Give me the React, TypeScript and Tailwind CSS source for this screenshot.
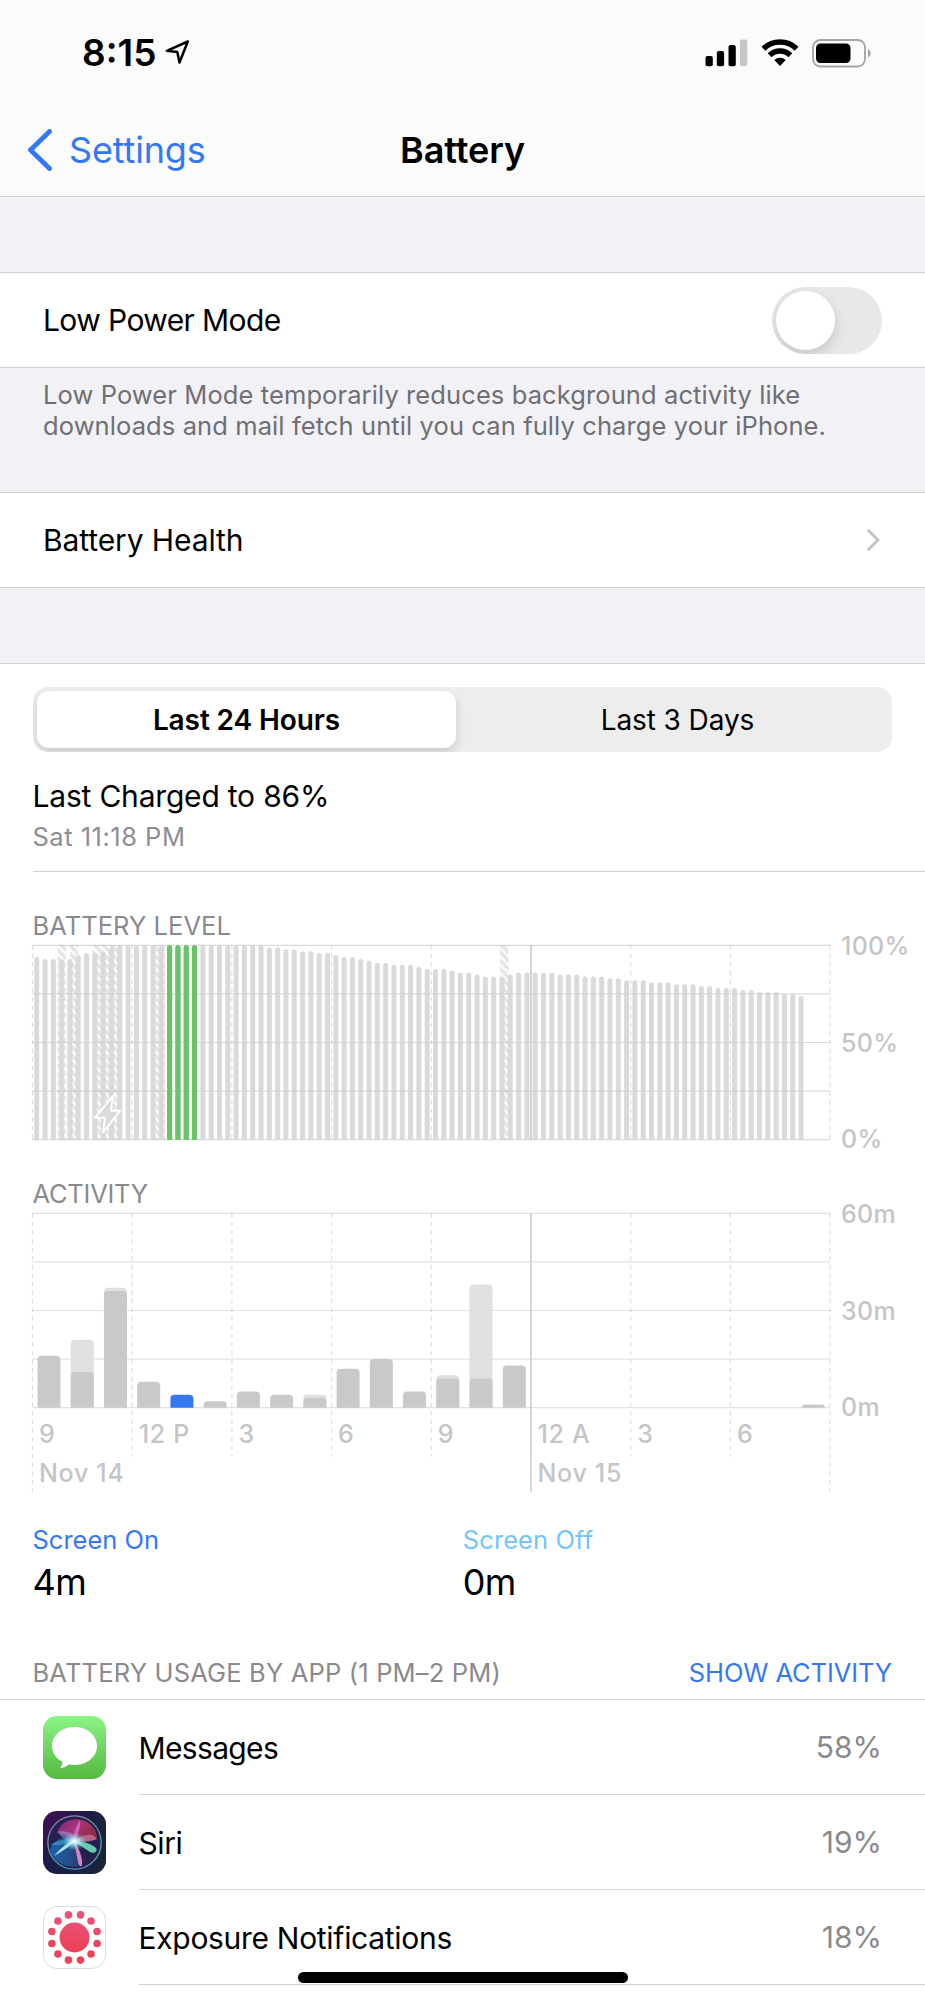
const LEVELS: number[] = [
  94, 93, 93, 93, 93, 95, 96, 96, 97, 99, 100, 100, 100, 100, 100, 100, 100, 100, 100, 100, 100, 100, 100, 100, 100, 100,
  100, 100, 99, 99, 98, 98, 97, 97, 96, 96, 95, 94, 94, 93, 92, 91, 91, 90, 90, 90, 89, 88, 88, 88, 87, 86, 86, 85, 84,
  84, 84, 85, 86, 86, 86, 86, 86, 85, 85, 85, 84, 84, 84, 83, 83, 82, 82, 82, 81, 81, 81, 80, 80, 80, 79, 79, 78, 78,
  78, 77, 77, 76, 76, 76, 75, 75, 74,
];

// Charging periods, as [start, end] in 15 minute slots.
const CHARGING: [number, number][] = [
  [3, 4.05],
  [4.5, 5.5],
  [7.25, 10.5],
  [14.7, 15.95],
  [56.25, 57.3],
];

type Hour = { slot: number; on: number; off: number; active?: boolean };
const HOURS: Hour[] = [
  { slot: 0, on: 16, off: 0 },
  { slot: 1, on: 11, off: 10 },
  { slot: 2, on: 36, off: 1 },
  { slot: 3, on: 8, off: 0 },
  { slot: 4, on: 4, off: 0, active: true },
  { slot: 5, on: 2, off: 0 },
  { slot: 6, on: 5, off: 0 },
  { slot: 7, on: 4, off: 0 },
  { slot: 8, on: 3, off: 1 },
  { slot: 9, on: 12, off: 0 },
  { slot: 10, on: 15, off: 0 },
  { slot: 11, on: 5, off: 0 },
  { slot: 12, on: 9, off: 1 },
  { slot: 13, on: 9, off: 29 },
  { slot: 14, on: 13, off: 0 },
  { slot: 23, on: 1, off: 0 },
];

const W = 797.6;
const H = 194.4;
const GRID = [0, 1, 2, 3, 4, 5, 6, 7, 8];

const isSelected = (slot: number) => slot >= 16 && slot <= 19;

function topRounded(x: number, y: number, w: number, h: number, radius: number) {
  const r = Math.min(radius, h);
  return `M${x} ${y + h}V${y + r}Q${x} ${y} ${x + r} ${y}H${x + w - r}Q${x + w} ${y} ${x + w} ${y + r}V${y + h}Z`;
}

function GridLines({ faint = false }: { faint?: boolean }) {
  return (
    <g stroke="#000" strokeOpacity={faint ? 0.035 : 0.115} strokeWidth="1.2">
      {[0, 1, 2, 3, 4].map((i) => (
        <line key={i} x1="0" x2={W} y1={(i * H) / 4} y2={(i * H) / 4} />
      ))}
    </g>
  );
}

function BatteryLevelChart() {
  const pitch = W / 96;
  const bar = (v: number, i: number) => {
    const h = (v / 100) * H;
    return <path key={i} d={topRounded(i * pitch + 1.7, H - h, 5, h, 2.5)} fill={isSelected(i) ? "#68c466" : "#dadada"} />;
  };
  return (
    <svg width="841" height="212" viewBox="-32.5 -9.3 841 212" className="block shrink-0">
      <defs>
        <pattern id="hatch" width="8.3" height="8.3" patternUnits="userSpaceOnUse">
          <rect width="8.3" height="8.3" fill="#e6e6e7" />
          <path d="M-2 -2L10.3 10.3M-2 6.3L2 10.3M6.3 -2L10.3 2" stroke="#fff" strokeWidth="2" />
        </pattern>
      </defs>
      {GRID.map((i) => (
        <line key={i} x1={(i * W) / 8} x2={(i * W) / 8} y1="0" y2={H} stroke="#dededf" strokeWidth="1.2" strokeDasharray="4.3 4.3" />
      ))}
      {CHARGING.map(([a, b]) => (
        <rect key={a} x={a * pitch} y="0" width={(b - a) * pitch} height={H} fill="url(#hatch)" />
      ))}
      <GridLines />
      {LEVELS.map(bar)}
      <GridLines faint />
      {LEVELS.map((v, i) => (isSelected(i) ? bar(v, i) : null))}
      <line x1={(5 * W) / 8} x2={(5 * W) / 8} y1="0" y2={H} stroke="#c9c9cb" strokeWidth="1.4" />
      <path
        d="M80.5 150.500L62.500 172.500H72.500L70.500 187L87.500 165.500H78.500Z"
        fill="#dadada"
        stroke="#fff"
        strokeWidth="1.9"
        strokeLinejoin="round"
      />
    </svg>
  );
}

function ActivityChart() {
  const pitch = W / 24;
  const unit = H / 60;
  return (
    <svg width="841" height="290" viewBox="-32.5 -9.3 841 290" className="block shrink-0">
      {GRID.map((i) => (
        <line
          key={i}
          x1={(i * W) / 8}
          x2={(i * W) / 8}
          y1="0"
          y2={i === 0 || i === 8 ? 279 : 243}
          stroke="#dededf"
          strokeWidth="1.2"
          strokeDasharray="4.3 4.3"
        />
      ))}
      <GridLines />
      <line x1={(5 * W) / 8} x2={(5 * W) / 8} y1="0" y2="279" stroke="#c9c9cb" strokeWidth="1.4" />
      {HOURS.map(({ slot, on, off, active }) => {
        const x = slot * pitch + 5;
        const total = (on + off) * unit;
        return (
          <g key={slot}>
            {off > 0 && <path d={topRounded(x, H - total, 23, total, 4)} fill="#e0e0e0" />}
            <path d={topRounded(x, H - on * unit, 23, on * unit, 4)} fill={active ? "#3478f6" : "#c9c9c9"} />
          </g>
        );
      })}
      <g fontFamily="Inter, sans-serif" fontSize="25" fontWeight="500" letterSpacing="0.7" fill="#c5c5c7">
        {["9", "12 P", "3", "6", "9", "12 A", "3", "6"].map((t, i) => (
          <text key={i} x={(i * W) / 8 + 6.5} y="229.5">
            {t}
          </text>
        ))}
        <text x="6.5" y="269">
          Nov 14
        </text>
        <text x={(5 * W) / 8 + 6.5} y="269">
          Nov 15
        </text>
      </g>
    </svg>
  );
}

function AxisLabels({ labels }: { labels: string[] }) {
  return (
    <div className="flex h-[212px] w-[84px] shrink-0 flex-col justify-between pt-px text-[25px] leading-[18px] font-medium tracking-[0.3px] text-[#c5c5c7]">
      {labels.map((l) => (
        <span key={l}>{l}</span>
      ))}
    </div>
  );
}

function MessagesIcon() {
  return (
    <svg width="63" height="63" viewBox="0 0 63 63">
      <defs>
        <linearGradient id="msg" x1="0" y1="0" x2="0" y2="1">
          <stop offset="0" stopColor="#8cf486" />
          <stop offset="1" stopColor="#54b840" />
        </linearGradient>
      </defs>
      <rect width="63" height="63" rx="14" fill="url(#msg)" />
      <path
        d="M31.500 11C18.800 11 9 19.500 9 30C9 37 13 42.500 19.500 46C19.500 48 18.800 50 17 52C20.500 52 23.500 50.500 26 48.600C27.800 48.900 29.600 49 31.500 49C44.200 49 54 40.500 54 30C54 19.500 44.200 11 31.500 11Z"
        fill="#fff"
      />
    </svg>
  );
}

function SiriIcon() {
  return (
    <svg width="63" height="63" viewBox="0 0 63 63">
      <defs>
        <linearGradient id="siri-bg" x1="0" y1="0" x2="1" y2="1">
          <stop offset="0" stopColor="#410f56" />
          <stop offset="0.5" stopColor="#1b1c4a" />
          <stop offset="1" stopColor="#16263a" />
        </linearGradient>
        <linearGradient id="siri-edge" x1="0" y1="0" x2="1" y2="0">
          <stop offset="0.7" stopColor="#1b2436" stopOpacity="0" />
          <stop offset="1" stopColor="#1b2436" />
        </linearGradient>
        <linearGradient id="siri-ring" x1="0" y1="0" x2="0.6" y2="1">
          <stop offset="0" stopColor="#a479b8" />
          <stop offset="0.5" stopColor="#5f9f93" />
          <stop offset="1" stopColor="#5b9fc4" />
        </linearGradient>
        <linearGradient id="siri-top" x1="0" y1="0" x2="1" y2="0.5">
          <stop offset="0" stopColor="#8a2c98" />
          <stop offset="0.5" stopColor="#d63a86" />
          <stop offset="1" stopColor="#b0303f" />
        </linearGradient>
        <linearGradient id="siri-low" x1="0" y1="0" x2="1" y2="0">
          <stop offset="0" stopColor="#1c5fae" />
          <stop offset="1" stopColor="#2d6fae" stopOpacity="0.4" />
        </linearGradient>
        <radialGradient id="siri-glow">
          <stop offset="0" stopColor="#fff" />
          <stop offset="0.3" stopColor="#d4f6ff" stopOpacity="0.8" />
          <stop offset="1" stopColor="#5fd0f0" stopOpacity="0" />
        </radialGradient>
      </defs>
      <rect width="63" height="63" rx="14" fill="url(#siri-bg)" />
      <rect width="63" height="63" rx="14" fill="url(#siri-edge)" />
      <circle cx="31.5" cy="31.5" r="26" fill="#26204f" />
      <path d="M14 22C17 11 29 6 39 9C49 12 54 20 54 28C45 31 37 31 31 30C24 25 19 22 14 22Z" fill="url(#siri-top)" opacity="0.75" />
      <path d="M7 38C13 26 23 25 31 30C35 38 37 47 36 55C22 58 9 50 7 38Z" fill="url(#siri-low)" />
      <path d="M15 20C26 19 35 25 38 31C29 33 18 29 15 20Z" fill="#8fa9e0" opacity="0.5" />
      <path d="M32 30C41 22 50 22 54 28C47 31 39 32 32 30Z" fill="#d9a0c0" opacity="0.5" />
      <path d="M37 9C33 15 30 23 30 31C34 28 38 17 37 9Z" fill="#e08ae0" opacity="0.6" />
      <path d="M7 34C15 29 24 27 33 29C26 33 16 35 7 34Z" fill="#4cc0d8" opacity="0.45" />
      <path d="M11 45C17 38 24 31 32 29C29 34 20 40 11 45Z" fill="#9cebf3" />
      <path d="M31 31C38 29 49 33 53 37C55 41 51 43 47 41C42 38 37 34 31 31Z" fill="#6fdcba" opacity="0.9" />
      <path d="M31 30C36 37 40 47 39 54C38 57 36 55 35 51C34 44 32 37 31 30Z" fill="#e98fd0" opacity="0.9" />
      <ellipse cx="31.5" cy="30.5" rx="12" ry="9" fill="url(#siri-glow)" />
      <circle cx="31.5" cy="31.5" r="26.7" fill="none" stroke="url(#siri-ring)" strokeWidth="1.3" />
    </svg>
  );
}

function ExposureIcon() {
  return (
    <svg width="63" height="63" viewBox="0 0 63 63">
      <defs>
        <linearGradient id="exp" gradientUnits="userSpaceOnUse" x1="0" y1="5" x2="0" y2="40">
          <stop offset="0" stopColor="#e95480" />
          <stop offset="1" stopColor="#ea445a" />
        </linearGradient>
      </defs>
      <rect x="0.5" y="0.5" width="62" height="62" rx="13.5" fill="#fff" stroke="#dcdcdc" />
      <g fill="url(#exp)">
        <circle cx="31.5" cy="31.5" r="15" />
        {[15, 45, 75, 105, 135, 165, 195, 225, 255, 285, 315, 345].map((deg) => {
          const a = (deg * Math.PI) / 180;
          return <circle key={deg} cx={31.5 + 23.4 * Math.cos(a)} cy={31.5 + 23.4 * Math.sin(a)} r="3.8" />;
        })}
      </g>
    </svg>
  );
}

const APPS = [
  { name: "Messages", value: "58%", icon: <MessagesIcon />, nameClass: "tracking-[-0.65px]" },
  { name: "Siri", value: "19%", icon: <SiriIcon />, nameClass: "tracking-[-0.4px]" },
  { name: "Exposure Notifications", value: "18%", icon: <ExposureIcon />, nameClass: "tracking-[-0.3px]" },
];

function StatusBar() {
  return (
    <div className="flex h-[105px] items-center justify-between pr-[53px] pl-[82px]">
      <div className="flex items-center gap-[9px]">
        <span className="text-[37px] leading-[44px] font-semibold">8:15</span>
        <svg width="25" height="26" viewBox="0 0 25 26" className="-mt-px">
          <path d="M22.800 2.500L1.800 11.800L12.300 13L14.500 23.500Z" fill="none" stroke="#000" strokeWidth="2.5" strokeLinejoin="round" />
        </svg>
      </div>
      <div className="mt-px flex items-center">
        <svg width="43" height="28" viewBox="0 0 43 28">
          <rect x="0.5" y="17" width="7.3" height="10.3" rx="2" />
          <rect x="11.8" y="12" width="7.3" height="15.3" rx="2" />
          <rect x="23.5" y="6" width="7.3" height="21.3" rx="2" />
          <rect x="35" y="0.5" width="7.3" height="26.8" rx="2" fill="#c7c7c8" />
        </svg>
        <svg width="38" height="28" viewBox="0 0 38 28" className="ml-[13px]">
          <g fill="none" stroke="#000" strokeWidth="5.4">
            <path d="M2.400 9.700A24 24 0 0 1 35.600 9.700" />
            <path d="M8.600 16.200A15 15 0 0 1 29.400 16.200" />
          </g>
          <path d="M13.300 21A8.300 8.300 0 0 1 24.700 21L19 27Z" />
        </svg>
        <svg width="60" height="29" viewBox="0 0 60 29" className="ml-[13px]">
          <rect x="1" y="1" width="52" height="26.5" rx="7.5" fill="none" stroke="#a3a3a5" strokeWidth="1.8" />
          <rect x="4" y="4.5" width="34.5" height="19.5" rx="4.5" />
          <path d="M56 10C59.500 11.500 59.500 17 56 18.500Z" fill="#a3a3a5" />
        </svg>
      </div>
    </div>
  );
}

export default function App() {
  return (
    <div className="flex h-[2000px] w-[925px] flex-col overflow-hidden bg-white font-['Inter',sans-serif] text-black">
      <header className="h-[197px] shrink-0 border-b border-[#cfcfd2] bg-[#fbfbfc]">
        <StatusBar />
        <nav className="grid h-[89px] grid-cols-3 items-center text-[36px] leading-[44px]">
          <a className="flex items-center gap-[16px] pl-[27px] text-[#3478f6]">
            <svg width="26" height="42" viewBox="0 0 26 42">
              <path d="M22.500 2.500L3.500 21L22.500 39.500" fill="none" stroke="#3478f6" strokeWidth="4.8" strokeLinecap="round" strokeLinejoin="round" />
            </svg>
            <span className="tracking-[-0.15px]">Settings</span>
          </a>
          <h1 className="text-center font-semibold tracking-[-0.1px]">Battery</h1>
        </nav>
      </header>

      <main className="flex min-h-0 flex-1 flex-col bg-[#f2f1f6]">
        <section className="mt-[75px] flex h-[96px] shrink-0 items-center justify-between border-y border-[#d3d3d6] bg-white px-[43px]">
          <span className="text-[30px] tracking-[-0.6px]">Low Power Mode</span>
          <button aria-label="Low Power Mode" className="flex h-[67px] w-[110px] items-center overflow-hidden rounded-full bg-[#e8e8e8] p-1">
            <span className="h-[59px] w-[59px] rounded-full bg-white shadow-[0_6px_14px_rgba(0,0,0,0.14)]" />
          </button>
        </section>
        <p className="h-[124px] shrink-0 px-[43px] pt-[12px] text-[25.5px] leading-[30.5px] tracking-[0.1px] text-[#6f6f74]">
          Low Power Mode temporarily reduces background activity like
          <br />
          downloads and mail fetch until you can fully charge your iPhone.
        </p>
        <section className="flex h-[96px] shrink-0 items-center justify-between border-y border-[#d3d3d6] bg-white pr-[44px] pl-[43px]">
          <span className="pt-px text-[30px] tracking-[-0.1px]">Battery Health</span>
          <svg width="16" height="24" viewBox="0 0 16 24">
            <path d="M3.500 2.500L13 12L3.500 21.500" fill="none" stroke="#c4c4c6" strokeWidth="3" strokeLinecap="round" strokeLinejoin="round" />
          </svg>
        </section>

        <section className="mt-[75px] flex flex-1 flex-col border-t border-[#d3d3d6] bg-white">
          <div className="mx-[33px] mt-[23px] flex h-[65px] shrink-0 overflow-hidden rounded-[15px] bg-[#ededed] p-1 text-[28px] tracking-[-0.1px]">
            <button className="w-[419px] rounded-[12px] bg-white font-semibold shadow-[0_5px_10px_rgba(0,0,0,0.15)]">Last 24 Hours</button>
            <button className="flex-1 pl-[11px]">Last 3 Days</button>
          </div>
          <div className="ml-[32.5px] h-[120px] shrink-0 border-b border-[#d3d3d6] pt-[25px]">
            <div className="text-[30px] leading-[38px] tracking-[-0.2px]">Last Charged to 86%</div>
            <div className="mt-[5px] text-[25.5px] leading-[34px] tracking-[0.5px] text-[#8e8e92]">Sat 11:18 PM</div>
          </div>

          <h2 className="mt-[38px] ml-[32.5px] h-[26px] shrink-0 text-[25.5px] leading-[32px] tracking-[0.05px] text-[#8a8a8d]">BATTERY LEVEL</h2>
          <div className="flex h-[212px] shrink-0">
            <BatteryLevelChart />
            <AxisLabels labels={["100%", "50%", "0%"]} />
          </div>

          <h2 className="mt-[30px] ml-[32.5px] h-[26px] shrink-0 text-[25.5px] leading-[32px] tracking-[-0.25px] text-[#8a8a8d]">ACTIVITY</h2>
          <div className="flex h-[290px] shrink-0">
            <ActivityChart />
            <AxisLabels labels={["60m", "30m", "0m"]} />
          </div>

          <div className="mt-[29px] grid h-[87px] shrink-0 grid-cols-2 pl-[32.5px]">
            <div>
              <div className="text-[25.5px] leading-[34px] text-[#3478f6]">Screen On</div>
              <div className="mt-[3px] text-[36px] leading-[44px] tracking-[-0.6px]">4m</div>
            </div>
            <div className="-ml-[16px]">
              <div className="text-[25.5px] leading-[34px] tracking-[0.1px] text-[#72c6f8]">Screen Off</div>
              <div className="mt-[3px] text-[36px] leading-[44px] tracking-[-0.6px]">0m</div>
            </div>
          </div>

          <div className="mt-[47px] flex h-[43px] shrink-0 justify-between border-b border-[#d3d3d6] pr-[33px] pl-[32.5px] text-[25.5px] leading-[32px]">
            <h2 className="tracking-[0.17px] text-[#8a8a8d]">BATTERY USAGE BY APP (1 PM–2 PM)</h2>
            <a className="tracking-[-0.1px] text-[#3478f6]">SHOW ACTIVITY</a>
          </div>
          {APPS.map(({ name, value, icon, nameClass }) => (
            <div key={name} className="flex h-[95px] shrink-0 pl-[43px]">
              <div className="flex w-[95.5px] items-center">{icon}</div>
              <div className="flex flex-1 items-center justify-between border-b border-[#d3d3d6] pr-[43px] text-[30px]">
                <span className={`pt-[2px] ${nameClass}`}>{name}</span>
                <span className="text-[#8a8a8d]">{value}</span>
              </div>
            </div>
          ))}
        </section>
      </main>
      <div className="absolute top-[1972px] left-[298px] h-[11px] w-[330px] rounded-full bg-black" />
    </div>
  );
}
